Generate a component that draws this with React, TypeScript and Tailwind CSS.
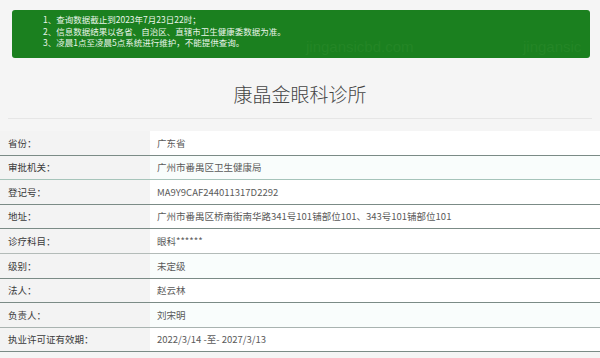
const NOTICES = [
  "1、查询数据截止到2023年7月23日22时；",
  "2、信息数据结果以各省、自治区、直辖市卫生健康委数据为准。",
  "3、凌晨1点至凌晨5点系统进行维护，不能提供查询。",
];

type Row = { label: string; value: string; line: string; tint: string };

const ROWS: Row[] = [
  { label: "省份：", value: "广东省", line: "border-[#7b8b86]", tint: "bg-white" },
  { label: "审批机关：", value: "广州市番禺区卫生健康局", line: "border-[#a6c4ba]", tint: "bg-[#f9fdfc]" },
  { label: "登记号：", value: "MA9Y9CAF244011317D2292", line: "border-[#7b8b86]", tint: "bg-white" },
  { label: "地址：", value: "广州市番禺区桥南街南华路341号101铺部位101、343号101铺部位101", line: "border-[#7b8b86]", tint: "bg-white" },
  { label: "诊疗科目：", value: "眼科******", line: "border-[#b3bbb8]", tint: "bg-white" },
  { label: "级别：", value: "未定级", line: "border-[#7b8b86]", tint: "bg-[#f9fdfc]" },
  { label: "法人：", value: "赵云林", line: "border-[#7b8b86]", tint: "bg-white" },
  { label: "负责人：", value: "刘宋明", line: "border-[#a9b3b0]", tint: "bg-[#f9fdfc]" },
  { label: "执业许可证有效期：", value: "2022/3/14 -至- 2027/3/13", line: "border-[#7b8b86]", tint: "bg-white" },
];

export default function App() {
  return (
    <div className="w-[600px] h-[358px] overflow-hidden bg-[#f5f5f5] font-['Noto_Sans_CJK_SC',sans-serif]">
      <Notice />
      <Title />
      <InfoTable />
    </div>
  );
}

function Notice() {
  return (
    <div className="pt-[10px] pl-[12px] pr-[10px]">
      <div className="relative h-[48px] rounded-[3px] bg-[#1b801f] overflow-hidden pl-[31px] pt-[4px]">
        {/* watermark */}
        <div className="absolute left-[294px] top-[29px] text-[15px] leading-[16px] text-[#248626] font-['Liberation_Sans',sans-serif]">
          jingansicbd.com
        </div>
        <div className="absolute left-[511px] top-[29px] text-[15px] leading-[16px] text-[#248626] font-['Liberation_Sans',sans-serif]">
          jingansic
        </div>
        <div className="relative flex flex-col text-[8.5px] leading-[11.5px] text-[#eaf5ea]">
          {NOTICES.map((n, i) => (
            <span key={i}>{n}</span>
          ))}
        </div>
      </div>
    </div>
  );
}

function Title() {
  return (
    <div className="mx-[8px] h-[61px] border-b border-[#e6e6e6] flex items-center justify-center pt-[10px]">
      <h1 className="text-[19px] leading-none font-light text-[#444]">康晶金眼科诊所</h1>
    </div>
  );
}

function InfoTable() {
  return (
    <div className="mt-[12px] flex flex-col">
      {ROWS.map((r, i) => (
        <div key={i} className={`flex h-[24.6px] border-b ${r.line}`}>
          <div className="w-[150px] shrink-0 bg-[#f3f3f3] pl-[8px] flex items-center text-[9.5px] text-[#3a3a3a]">
            {r.label}
          </div>
          <div className={`flex-1 ${r.tint} pl-[7px] flex items-center text-[9.5px] text-[#5a5a5a]`}>
            {r.value}
          </div>
        </div>
      ))}
    </div>
  );
}
